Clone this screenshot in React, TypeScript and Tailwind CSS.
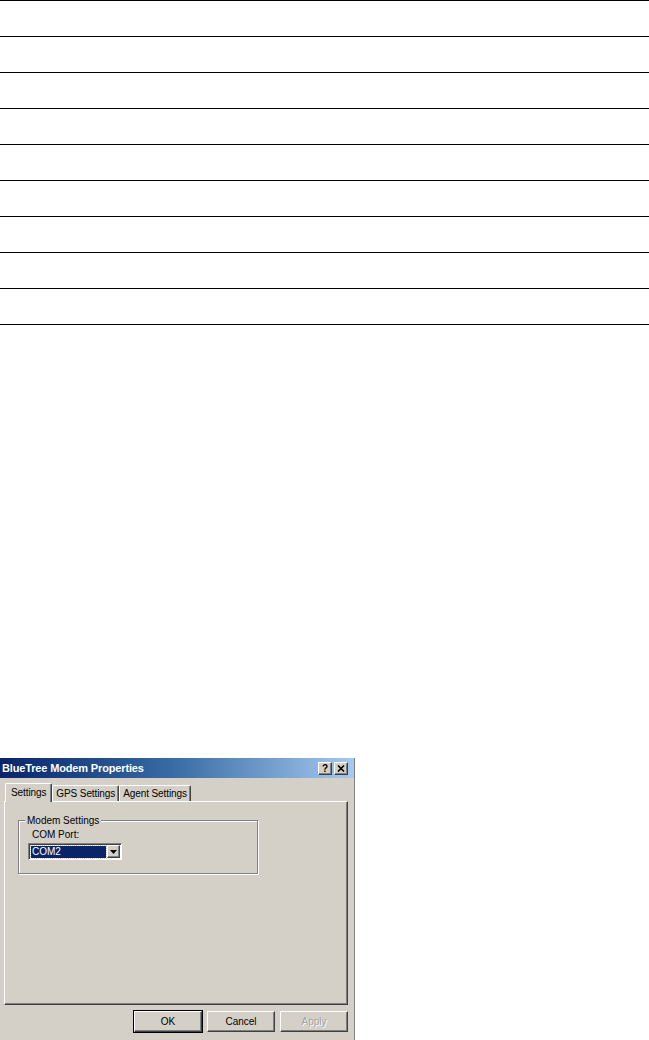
import React from "react";

const raised =
  "border border-t-white border-l-white border-r-[#404040] border-b-[#404040] shadow-[inset_-1px_-1px_0_#808080]";

function TitleBtn({ children }: { children: React.ReactNode }) {
  return (
    <div
      className={`w-[14px] h-[13px] bg-[#d4d0c8] ${raised} flex items-center justify-center`}
    >
      {children}
    </div>
  );
}

function Tab({ label, active }: { label: string; active?: boolean }) {
  return (
    <div
      className={
        active
          ? "relative z-10 h-[19px] -mb-px px-[5px] bg-[#d4d0c8] border-t border-l border-t-white border-l-white border-r border-r-[#404040] shadow-[inset_-1px_0_0_#808080] flex items-center rounded-t-[2px]"
          : "h-[16px] px-[3px] bg-[#d4d0c8] border-t border-l border-t-white border-l-white border-r border-r-[#404040] shadow-[inset_-1px_0_0_#808080] flex items-center rounded-t-[2px]"
      }
    >
      <span className="text-[10px] leading-none tracking-[-0.1px] text-black">{label}</span>
    </div>
  );
}

function Btn({
  label,
  isDefault,
  disabled,
}: {
  label: string;
  isDefault?: boolean;
  disabled?: boolean;
}) {
  return (
    <div
      className={
        "w-[68px] h-[21px] bg-[#d4d0c8] flex items-center justify-center " +
        (isDefault ? "outline outline-1 outline-black " : "") +
        raised
      }
    >
      <span
        className={
          "text-[10px] leading-none " +
          (disabled
            ? "text-[#a0a0a0] [text-shadow:1px_1px_0_#fff]"
            : "text-black")
        }
      >
        {label}
      </span>
    </div>
  );
}

export default function App() {
  return (
    <div
      className="w-[649px] h-[1040px] bg-white overflow-hidden flex flex-col"
      style={{ fontFamily: '"Liberation Sans", Arial, sans-serif' }}
    >
      {/* ruled lines */}
      <div className="flex flex-col">
        {Array.from({ length: 9 }).map((_, i) => (
          <div key={i} className="h-[36px] border-t border-black" />
        ))}
        <div className="h-px bg-black" />
      </div>

      {/* dialog */}
      <div className="mt-[433px] w-[355px] h-[282px] bg-[#d4d0c8] border-r border-r-[#808080] flex flex-col">
        {/* title bar */}
        <div className="h-[20px] bg-gradient-to-r from-[#0a246a] via-[#3a6ea5] to-[#a6caf0] flex items-center justify-between pl-[2px] pr-[6px]">
          <span className="text-white font-bold text-[11px] leading-none tracking-[-0.15px]">
            BlueTree Modem Properties
          </span>
          <div className="flex gap-[2px] mt-[1px]">
            <TitleBtn>
              <span className="text-[10px] font-bold leading-none text-black">?</span>
            </TitleBtn>
            <TitleBtn>
              <svg width="8" height="7" viewBox="0 0 8 7">
                <path d="M1 0.5 L7 6.5 M7 0.5 L1 6.5" stroke="#000" strokeWidth="1.6" />
              </svg>
            </TitleBtn>
          </div>
        </div>

        {/* body */}
        <div className="pl-[4px] pt-[4px] flex flex-col">
          <div className="flex items-end pl-[1px] h-[19px]">
            <Tab label="Settings" active />
            <Tab label="GPS Settings" />
            <Tab label="Agent Settings" />
          </div>
          <div className="w-[344px] h-[204px] border-t border-l border-t-white border-l-white border-r border-b border-r-[#404040] border-b-[#404040] shadow-[inset_-1px_-1px_0_#808080] pl-[13px] pt-[18px]">
            {/* group box */}
            <div className="relative w-[240px] h-[54px] border border-[#808080] shadow-[1px_1px_0_#fff,inset_1px_1px_0_#fff] pl-[9px] pt-[7px]">
              <span className="absolute -top-[7px] left-[6px] px-[2px] bg-[#d4d0c8] text-[10px] leading-[13px] text-black">
                Modem Settings
              </span>
              <div className="pl-[4px] text-[10px] leading-[13px] text-black">COM Port:</div>
              <div className="mt-[2px] w-[94px] h-[17px] bg-white border border-t-[#808080] border-l-[#808080] border-r-white border-b-white shadow-[inset_1px_1px_0_#404040] flex items-center pl-[2px] pr-[1px]">
                <div className="flex-1 h-[12px] bg-[#0a246a] outline outline-1 outline-dotted outline-[#d4d0c8] flex items-center pl-[1px]">
                  <span className="text-white text-[10px] leading-none">COM2</span>
                </div>
                <div
                  className={`ml-[1px] w-[13px] h-[13px] bg-[#d4d0c8] ${raised} flex items-center justify-center`}
                >
                  <svg width="7" height="4" viewBox="0 0 7 4">
                    <path d="M0 0 H7 L3.5 4 Z" fill="#000" />
                  </svg>
                </div>
              </div>
            </div>
          </div>

          {/* buttons */}
          <div className="flex gap-[5px] pl-[130px] pt-[6px]">
            <Btn label="OK" isDefault />
            <Btn label="Cancel" />
            <Btn label="Apply" disabled />
          </div>
        </div>
      </div>
    </div>
  );
}
